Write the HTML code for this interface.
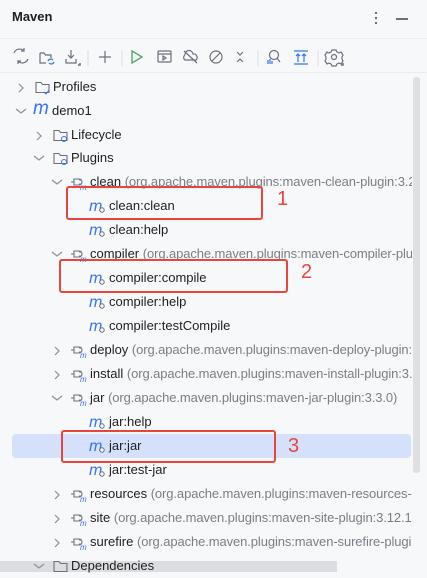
<!DOCTYPE html>
<html><head><meta charset="utf-8"><style>
*{margin:0;padding:0;box-sizing:border-box}
body{width:427px;height:572px;overflow:hidden;background:#f7f8fa;font-family:"Liberation Sans",sans-serif;font-size:13px;color:#1e1f22;position:relative}
.a{position:absolute}
.row{position:absolute;left:0;height:24px;line-height:24px;white-space:nowrap;width:412px;overflow:hidden}
.g{color:#7b7e85;letter-spacing:-0.1px}
.chev{position:absolute;top:7px}
.ic{position:absolute;top:4px}
.t{position:absolute;top:0}
.box{position:absolute;border:2.5px solid #e8453c;border-radius:3px}
.num{position:absolute;color:#e8453c;font-size:20px}
</style></head><body>
<div class="a" style="left:12px;top:9px;font-weight:bold;font-size:13px">Maven</div>
<div class="a" style="left:375px;top:12px;width:2px;height:2px;background:#6c707e;box-shadow:0 5px 0 #6c707e,0 10px 0 #6c707e"></div>
<div class="a" style="left:396px;top:18px;width:12px;height:1.5px;background:#6c707e"></div>
<div class="a" style="left:0;top:38px;width:427px;height:1px;background:#ebecf0"></div>
<div class="a" style="left:0;top:72px;width:427px;height:1px;background:#ebecf0"></div>
<svg class="a" style="left:0;top:40px" width="427" height="32" fill="none" stroke="#6c707e" stroke-width="1.2">
<path d="M14 13a6 6 0 0 1 10-2M28 19a6 6 0 0 1-10 2M24 8v3h-3M18 24v-3h3"/>
<path d="M40 13v10h6M40 13h4l1.5 2H51v3"/><path d="M48 21a3 3 0 0 1 5 -1M54 22a3 3 0 0 1-5 1" stroke="#3574f0"/>
<path d="M71 10v8M68 15l3 3 3-3M66 19v4h10v-4"/><path d="M78 25h2v-2" stroke-width="1.5"/>
<path d="M88 10v16" stroke="#dfe1e5"/>
<path d="M105 11v12M99 17h12"/>
<path d="M122 10v16" stroke="#dfe1e5"/>
<path d="M132 11l10 6-10 6z" stroke="#55a76a" stroke-width="1.4"/>
<rect x="158" y="11" width="13" height="11" rx="1"/><path d="M158 14h13M163 16l3 2-3 2z"/>
<path d="M185 15a4 4 0 0 1 8-1a3.5 3.5 0 0 1 3 6h-11a3 3 0 0 1 0-5M184 11l13 12"/>
<circle cx="216" cy="17" r="6"/><path d="M212 21l8-8"/>
<path d="M237 12l3 3 3-3M237 22l3-3 3 3"/>
<path d="M258 10v16" stroke="#dfe1e5"/>
<circle cx="274" cy="15" r="4.5"/><path d="M277 18l3 4"/><path d="M268 20v4M270 19v5M272 21v3" stroke="#3574f0"/>
<path d="M294 24h14M294 11h14M298 22v-8M296 16l2-2 2 2M304 22v-8M302 16l2-2 2 2" stroke="#3574f0"/>
<path d="M318 10v16" stroke="#dfe1e5"/>
<circle cx="334" cy="17" r="2.5"/><path d="M332 10h4l1 2 2 1 2-1 2 3-1 2v2l1 2-2 3-2-1-2 1-1 2h-4l-1-2-2-1-2 1-2-3 1-2v-2l-1-2 2-3 2 1 2-1z"/><path d="M341 25h2v-2" stroke-width="1.5"/>
</svg>
<div class="a" style="left:413px;top:77px;width:7px;height:396px;background:#dfe0e3;border-radius:3px"></div>
<div class="a" style="left:12px;top:434px;width:399px;height:24px;background:#d5e1fb;border-radius:4px"></div>
<div class="a" style="left:0;top:561px;width:337px;height:11px;background:#dcdde0"></div>

<svg width="0" height="0" style="position:absolute"><defs>
<g id="cr"><path d="M2 2l4 4-4 4" fill="none" stroke="#8c8f96" stroke-width="1.2"/></g>
<g id="cd"><path d="M1 3l5 4 5-4" fill="none" stroke="#8c8f96" stroke-width="1.2"/></g>
<g id="fo"><path d="M2 3.5h5l1.5 2H15v8H2z" fill="none" stroke="#6c707e" stroke-width="1.1"/></g>
<g id="pl"><path d="M1 8h3M4 5h5a3 3 0 0 1 0 6H4zM9 6h3M9 10h2" fill="none" stroke="#6c707e" stroke-width="1.1"/><text x="10" y="16" font-size="8" font-style="italic" fill="#3574f0" font-family="Liberation Sans">m</text></g>
<g id="go"><text x="0" y="13" font-size="16" font-style="italic" fill="#3574f0" font-family="Liberation Sans">m</text><circle cx="13" cy="12" r="2.2" fill="#f7f8fa" stroke="#6c707e"/></g>
</defs></svg>

<div class="row" style="top:75px"><svg class="chev" style="left:17px" width="12" height="12"><use href="#cr"/></svg><svg class="ic" style="left:34px" width="17" height="17"><use href="#fo"/><path d="M10 13l2 2 3-4" fill="none" stroke="#3574f0"/></svg><span class="t" style="left:53px">Profiles</span></div>
<div class="row" style="top:99px"><svg class="chev" style="left:15px" width="12" height="12"><use href="#cd"/></svg><span class="t" style="left:33px;color:#3574f0;font-style:italic;font-size:19px;top:-2px">m</span><span class="t" style="left:52px">demo1</span></div>
<div class="row" style="top:123px"><svg class="chev" style="left:35px" width="12" height="12"><use href="#cr"/></svg><svg class="ic" style="left:52px" width="17" height="17"><use href="#fo"/><circle cx="12" cy="12" r="2.5" fill="none" stroke="#3574f0"/></svg><span class="t" style="left:71px">Lifecycle</span></div>
<div class="row" style="top:146px"><svg class="chev" style="left:33px" width="12" height="12"><use href="#cd"/></svg><svg class="ic" style="left:52px" width="17" height="17"><use href="#fo"/><circle cx="12" cy="12" r="2.5" fill="none" stroke="#3574f0"/></svg><span class="t" style="left:71px">Plugins</span></div>
<div class="row" style="top:170px"><svg class="chev" style="left:51px" width="12" height="12"><use href="#cd"/></svg><svg class="ic" style="left:70px" width="18" height="17"><use href="#pl"/></svg><span class="t" style="left:90px">clean <span class="g">(org.apache.maven.plugins:maven-clean-plugin:3.2.0)</span></span></div>
<div class="row" style="top:194px"><svg class="ic" style="left:89px" width="18" height="17"><use href="#go"/></svg><span class="t" style="left:109px">clean:clean</span></div>
<div class="row" style="top:218px"><svg class="ic" style="left:89px" width="18" height="17"><use href="#go"/></svg><span class="t" style="left:109px">clean:help</span></div>
<div class="row" style="top:242px"><svg class="chev" style="left:51px" width="12" height="12"><use href="#cd"/></svg><svg class="ic" style="left:70px" width="18" height="17"><use href="#pl"/></svg><span class="t" style="left:90px">compiler <span class="g">(org.apache.maven.plugins:maven-compiler-plugin:3.11.0)</span></span></div>
<div class="row" style="top:266px"><svg class="ic" style="left:89px" width="18" height="17"><use href="#go"/></svg><span class="t" style="left:109px">compiler:compile</span></div>
<div class="row" style="top:290px"><svg class="ic" style="left:89px" width="18" height="17"><use href="#go"/></svg><span class="t" style="left:109px">compiler:help</span></div>
<div class="row" style="top:314px"><svg class="ic" style="left:89px" width="18" height="17"><use href="#go"/></svg><span class="t" style="left:109px">compiler:testCompile</span></div>
<div class="row" style="top:338px"><svg class="chev" style="left:53px" width="12" height="12"><use href="#cr"/></svg><svg class="ic" style="left:70px" width="18" height="17"><use href="#pl"/></svg><span class="t" style="left:90px">deploy <span class="g">(org.apache.maven.plugins:maven-deploy-plugin:3.1.1)</span></span></div>
<div class="row" style="top:362px"><svg class="chev" style="left:53px" width="12" height="12"><use href="#cr"/></svg><svg class="ic" style="left:70px" width="18" height="17"><use href="#pl"/></svg><span class="t" style="left:90px">install <span class="g">(org.apache.maven.plugins:maven-install-plugin:3.1.1)</span></span></div>
<div class="row" style="top:386px"><svg class="chev" style="left:51px" width="12" height="12"><use href="#cd"/></svg><svg class="ic" style="left:70px" width="18" height="17"><use href="#pl"/></svg><span class="t" style="left:90px">jar <span class="g">(org.apache.maven.plugins:maven-jar-plugin:3.3.0)</span></span></div>
<div class="row" style="top:410px"><svg class="ic" style="left:89px" width="18" height="17"><use href="#go"/></svg><span class="t" style="left:109px">jar:help</span></div>
<div class="row" style="top:434px"><svg class="ic" style="left:89px" width="18" height="17"><use href="#go"/></svg><span class="t" style="left:109px">jar:jar</span></div>
<div class="row" style="top:458px"><svg class="ic" style="left:89px" width="18" height="17"><use href="#go"/></svg><span class="t" style="left:109px">jar:test-jar</span></div>
<div class="row" style="top:482px"><svg class="chev" style="left:53px" width="12" height="12"><use href="#cr"/></svg><svg class="ic" style="left:70px" width="18" height="17"><use href="#pl"/></svg><span class="t" style="left:90px">resources <span class="g">(org.apache.maven.plugins:maven-resources-plugin:3.3.1)</span></span></div>
<div class="row" style="top:506px"><svg class="chev" style="left:53px" width="12" height="12"><use href="#cr"/></svg><svg class="ic" style="left:70px" width="18" height="17"><use href="#pl"/></svg><span class="t" style="left:90px">site <span class="g">(org.apache.maven.plugins:maven-site-plugin:3.12.1)</span></span></div>
<div class="row" style="top:530px"><svg class="chev" style="left:53px" width="12" height="12"><use href="#cr"/></svg><svg class="ic" style="left:70px" width="18" height="17"><use href="#pl"/></svg><span class="t" style="left:90px">surefire <span class="g">(org.apache.maven.plugins:maven-surefire-plugin:3.2.2)</span></span></div>
<div class="row" style="top:554px;width:337px"><svg class="chev" style="left:33px" width="12" height="12"><use href="#cd"/></svg><svg class="ic" style="left:52px" width="17" height="17"><use href="#fo"/></svg><span class="t" style="left:71px">Dependencies</span></div>

<div class="box" style="left:66px;top:186px;width:197px;height:34px"></div>
<div class="box" style="left:59px;top:259px;width:229px;height:34px"></div>
<div class="box" style="left:61px;top:430px;width:215px;height:33px"></div>
<div class="num" style="left:277px;top:188px">1</div>
<div class="num" style="left:301px;top:261px">2</div>
<div class="num" style="left:288px;top:435px">3</div>
</body></html>
